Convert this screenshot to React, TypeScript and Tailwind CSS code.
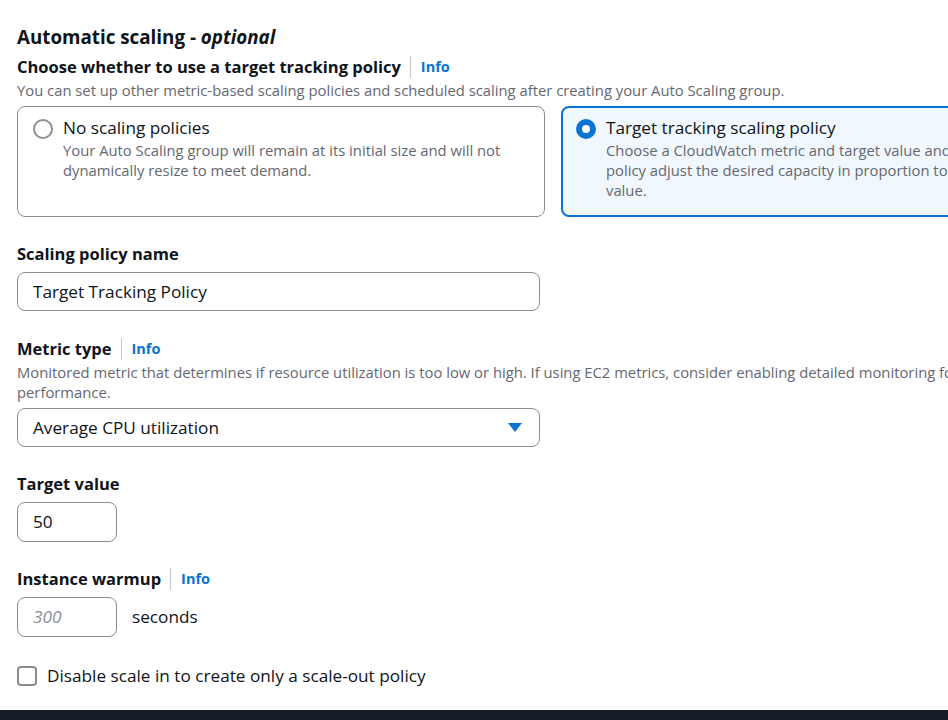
import React from 'react';

const font = { fontFamily: '"Open Sans", "Noto Sans", sans-serif' };

const Info = () => (
  <span className="flex items-center">
    <span className="ml-[9px] mr-[10px] h-[22px] w-px bg-[#c6c6cd]" />
    <a className="text-[14.5px] font-bold text-[#0972d3]">Info</a>
  </span>
);

const Label: React.FC<{ children: React.ReactNode; info?: boolean }> = ({ children, info }) => (
  <div className="flex items-center h-[22px]">
    <span className="text-[16.5px] font-bold leading-[22px] text-[#0f141a]">{children}</span>
    {info && <Info />}
  </div>
);

const RadioCard: React.FC<{ title: string; desc: string; checked?: boolean }> = ({ title, desc, checked }) => (
  <div
    className={`w-[528px] h-[111px] rounded-[8px] flex gap-[10px] ${
      checked ? 'border-2 border-[#0972d3] bg-[#f0f8fd] pl-[13px] pt-[9px]' : 'border border-[#8c8c94] bg-white pl-[15px] pt-[10px]'
    }`}
  >
    <div className="pt-[2px]">
      {checked ? (
        <div className="w-[20px] h-[20px] rounded-full bg-[#0972d3] flex items-center justify-center">
          <div className="w-[8px] h-[8px] rounded-full bg-white" />
        </div>
      ) : (
        <div className="w-[20px] h-[20px] rounded-full border-2 border-[#8c8c94] bg-white" />
      )}
    </div>
    <div className="pr-[14px]">
      <div className="text-[17.2px] leading-[22px] text-[#0f141a]">{title}</div>
      <div className="text-[14.8px] leading-[20px] text-[#656871] mt-[1px]">{desc}</div>
    </div>
  </div>
);

export default function App() {
  return (
    <div style={font} className="w-[948px] h-[720px] overflow-hidden bg-white flex flex-col">
      <div className="flex-1 w-[1089px] pl-[17px] pt-[24px]">
        <h2 className="text-[18.8px] font-bold leading-[26px] text-[#0f141a]">
          Automatic scaling - <i>optional</i>
        </h2>
        <div className="mt-[6px]">
          <Label info>Choose whether to use a target tracking policy</Label>
          <div className="text-[14.8px] leading-[20px] text-[#656871] mt-[2px]">
            You can set up other metric-based scaling policies and scheduled scaling after creating your Auto Scaling group.
          </div>
        </div>
        <div className="flex gap-[16px] mt-[6px]">
          <RadioCard
            title="No scaling policies"
            desc="Your Auto Scaling group will remain at its initial size and will not dynamically resize to meet demand."
          />
          <RadioCard
            checked
            title="Target tracking scaling policy"
            desc="Choose a CloudWatch metric and target value and let the scaling policy adjust the desired capacity in proportion to the metric's value."
          />
        </div>

        <div className="mt-[26px] w-[523px]">
          <Label>Scaling policy name</Label>
          <div className="mt-[7px] h-[39px] rounded-[8px] border border-[#8c8c94] flex items-center px-[15px] text-[17.2px] text-[#0f141a]">
            Target Tracking Policy
          </div>
        </div>

        <div className="mt-[27px]">
          <Label info>Metric type</Label>
          <div className="text-[14.8px] leading-[20px] text-[#656871] w-[1072px] mt-[2px]">
            Monitored metric that determines if resource utilization is too low or high. If using EC2 metrics, consider enabling detailed monitoring for better performance.
          </div>
          <div className="mt-[6px] w-[523px] h-[39px] rounded-[8px] border border-[#8c8c94] flex items-center justify-between pl-[15px] pr-[17px] text-[17.2px] text-[#0f141a]">
            <span>Average CPU utilization</span>
            <svg width="14" height="10" viewBox="0 0 14 10">
              <path d="M0 0 H14 L7 9 Z" fill="#0972d3" />
            </svg>
          </div>
        </div>

        <div className="mt-[26px]">
          <Label>Target value</Label>
          <div className="mt-[7px] w-[100px] h-[40px] rounded-[8px] border border-[#8c8c94] flex items-center px-[15px] text-[17.2px] text-[#0f141a]">
            50
          </div>
        </div>

        <div className="mt-[26px]">
          <Label info>Instance warmup</Label>
          <div className="mt-[7px] flex items-center gap-[15px]">
            <div className="w-[100px] h-[40px] rounded-[8px] border border-[#8c8c94] flex items-center px-[15px] text-[17.2px] italic text-[#8c8c94]">
              300
            </div>
            <span className="text-[17.2px] text-[#0f141a]">seconds</span>
          </div>
        </div>

        <div className="mt-[26px] flex items-center gap-[10px]">
          <div className="w-[20px] h-[20px] rounded-[4px] border-2 border-[#8c8c94] bg-white" />
          <span className="text-[17.2px] text-[#0f141a]">Disable scale in to create only a scale-out policy</span>
        </div>
      </div>
      <div className="h-[10px] bg-[#161d26]" />
    </div>
  );
}
